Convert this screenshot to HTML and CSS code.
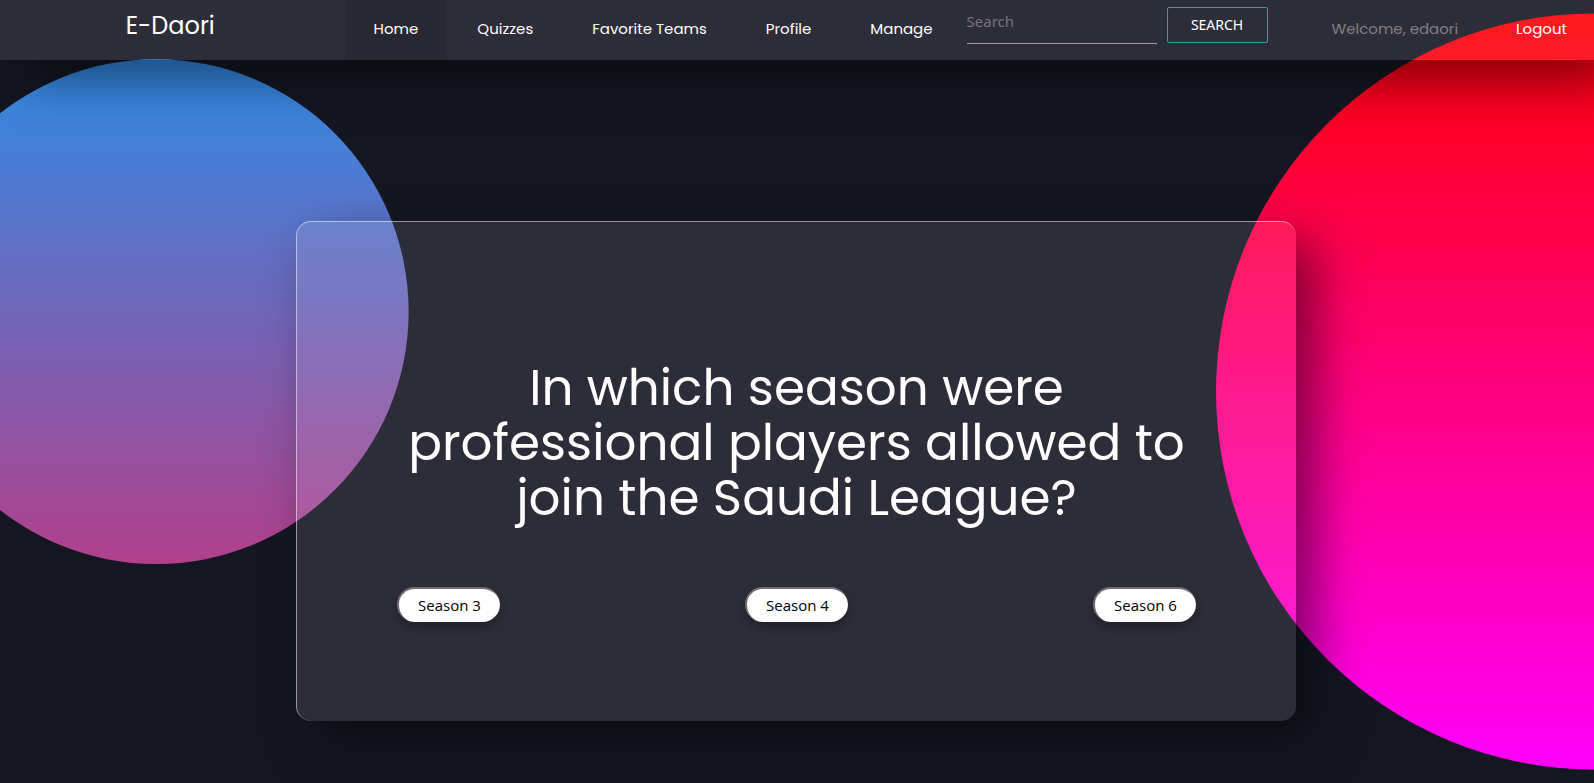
FILE: index.html
```html
<!DOCTYPE html>
<html lang="en">
<head>
<meta charset="utf-8">
<title>E-Daori</title>
<link rel="stylesheet" href="styles.css">
</head>
<body>
<header class="navbar">
  <div class="brand-area"><a class="brand" href="#">E-Daori</a></div>
  <nav class="links">
    <a class="link active" href="#">Home</a>
    <a class="link" href="#">Quizzes</a>
    <a class="link" href="#">Favorite Teams</a>
    <a class="link" href="#">Profile</a>
    <a class="link" href="#">Manage</a>
  </nav>
  <form class="search">
    <input class="search-input" type="search" placeholder="Search" aria-label="Search">
    <button class="search-button" type="submit">SEARCH</button>
  </form>
  <div class="account">
    <span class="welcome">Welcome, edaori</span>
    <a class="link logout" href="#">Logout</a>
  </div>
</header>
<main class="stage">
  <section class="card">
    <h1 class="question">In which season were professional players allowed to join the Saudi League?</h1>
    <div class="answers">
      <button class="answer" type="button">Season 3</button>
      <button class="answer" type="button">Season 4</button>
      <button class="answer" type="button">Season 6</button>
    </div>
  </section>
</main>
</body>
</html>
```
FILE: styles.css
```css
* {
  box-sizing: border-box;
}

body {
  margin: 0;
  min-height: 100vh;
  display: flex;
  flex-direction: column;
  position: relative;
  z-index: 0;
  overflow-x: hidden;
  background: #161623;
  color: #fff;
  font-family: Poppins, Inter, "Open Sans", sans-serif;
  font-size: 15px;
}

body::before,
body::after {
  content: "";
  position: absolute;
  inset: 0;
  z-index: -1;
}

body::before {
  background: linear-gradient(#f00, #f0f);
  clip-path: circle(30.1% at right 50%);
}

body::after {
  background: linear-gradient(#2196f3, #e91e63);
  clip-path: circle(20.1% at 9.8% 39.8%);
}

.navbar {
  display: flex;
  height: 60px;
  background: rgba(255, 255, 255, 0.1);
  box-shadow: 20px 20px 50px rgba(0, 0, 0, 0.5);
}

.brand-area {
  flex: 1;
  padding-right: 4px;
  text-align: center;
}

.brand {
  color: #fff;
  font-size: 24px;
  line-height: 52px;
  text-decoration: none;
}

.links {
  display: flex;
  gap: 1px;
}

.link {
  padding: 0 29px;
  color: #fff;
  line-height: 58px;
  text-decoration: none;
}

.active {
  background: rgba(0, 0, 0, 0.1);
}

.search {
  display: flex;
  align-items: flex-start;
  gap: 10px;
  padding-left: 5px;
}

.search-input {
  width: 190px;
  height: 44px;
  padding: 0 0 2px;
  border: 0;
  border-bottom: 1px solid #9e9e9e;
  outline: 0;
  background: transparent;
  color: #fff;
  font: 15px "Noto Sans", sans-serif;
  appearance: none;
}

.search-input::placeholder {
  color: #757580;
}

.search-button {
  width: 101px;
  height: 36px;
  margin-top: 7px;
  padding: 0 0 2px;
  border: 1px solid #26a69a;
  border-radius: 2px;
  background: transparent;
  color: #fff;
  font: 14px "Noto Sans", sans-serif;
}

.account {
  display: flex;
  margin-left: 64px;
}

.welcome {
  margin-right: 29px;
  color: #808080;
  line-height: 58px;
}

.logout {
  padding-right: 27px;
}

.stage {
  flex: 1;
  display: flex;
  align-items: center;
  justify-content: center;
  padding: 98px 26px 0 24px;
}

.card {
  display: flex;
  flex-direction: column;
  justify-content: center;
  gap: 62px;
  width: 100%;
  max-width: 1000px;
  min-height: 500px;
  padding: 40px 100px 0;
  border-top: 1px solid rgba(255, 255, 255, 0.5);
  border-left: 1px solid rgba(255, 255, 255, 0.5);
  border-radius: 15px;
  background: rgba(255, 255, 255, 0.1);
  box-shadow: 20px 20px 50px rgba(0, 0, 0, 0.5);
}

.question {
  margin: 0;
  font-size: 50px;
  font-weight: 400;
  line-height: 55px;
  text-align: center;
}

.answers {
  display: flex;
  justify-content: space-between;
}

.answer {
  width: 103px;
  height: 35px;
  padding: 0 0 2px;
  border: 0 solid #707070;
  border-width: 2px 0 0 2px;
  border-radius: 20px;
  background: #fff;
  color: #000;
  box-shadow: 0 5px 10px rgba(0, 0, 0, 0.3);
  font: 15px "Open Sans", sans-serif;
}
```
